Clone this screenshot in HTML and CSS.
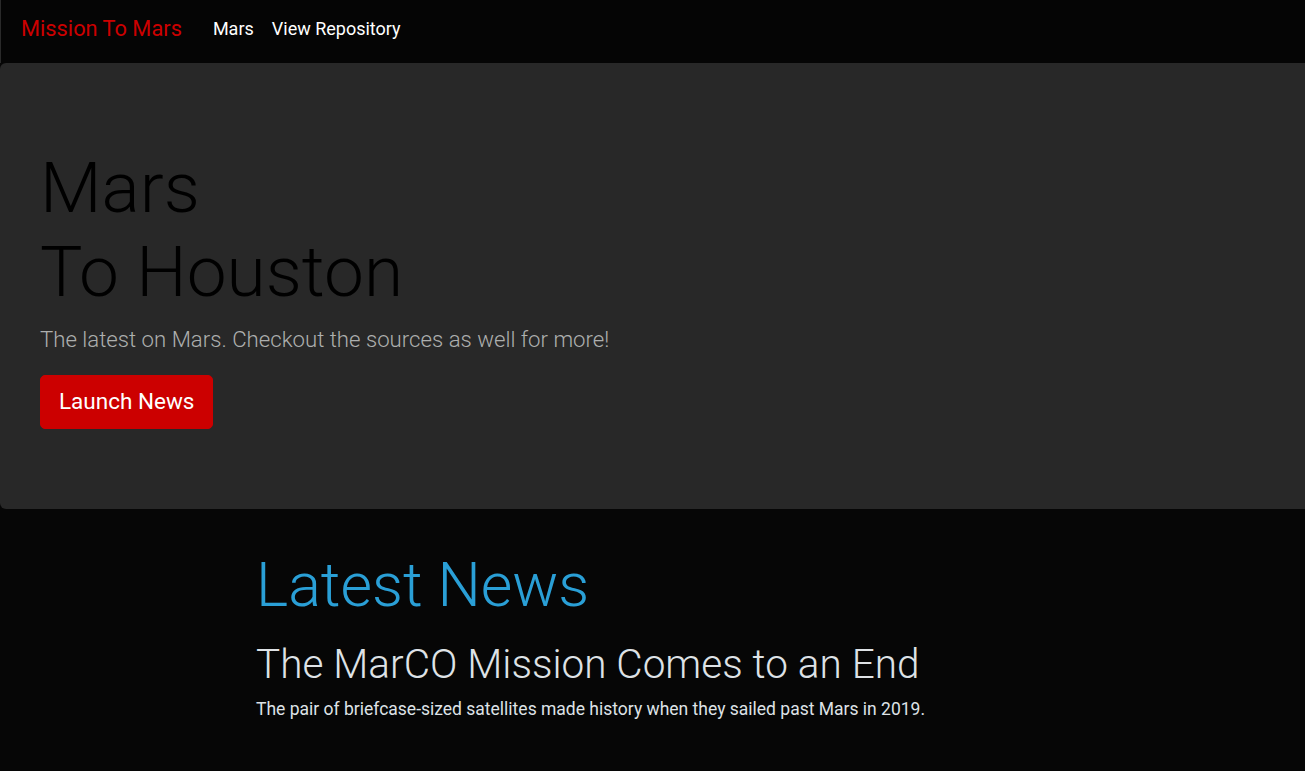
FILE: index.html
```html
<!DOCTYPE html>
<html lang="en">
<head>
<meta charset="utf-8">
<title>Mission To Mars</title>
<link rel="stylesheet" href="styles.css">
</head>
<body>
<nav class="navbar">
  <a class="brand" href="#">Mission To Mars</a>
  <ul class="nav">
    <li><a class="nav-link" href="#">Mars</a></li>
    <li><a class="nav-link" href="#">View Repository</a></li>
  </ul>
</nav>
<header class="jumbotron">
  <h1 class="display">Mars<br>To Houston</h1>
  <p class="lead">The latest on Mars. Checkout the sources as well for more!</p>
  <a class="btn" href="#">Launch News</a>
</header>
<main class="container">
  <h1 class="section-title">Latest News</h1>
  <h2 class="news-title">The MarCO Mission Comes to an End</h2>
  <p class="news-text">The pair of briefcase-sized satellites made history when they sailed past Mars in 2019.</p>
</main>
</body>
</html>
```
FILE: styles.css
```css
html, body {
  margin: 0;
  padding: 0;
}
body {
  background: #060606;
  color: #adafae;
  font-family: Roboto, "Liberation Sans", Arial, sans-serif;
  font-size: 18px;
  line-height: 1.5;
  min-height: 771px;
}
a { text-decoration: none; }

.navbar {
  display: flex;
  align-items: center;
  height: 63px;
  box-sizing: border-box;
  padding: 3px 18px 10px;
  background: #050505;
  border-left: 1px solid #2a2a2a;
}
.brand {
  color: #cc0000;
  font-size: 21.8px;
  line-height: 33.75px;
  padding: 7.6px 0 5.6px;
  margin-left: 2px;
  margin-right: 22px;
}
.nav {
  display: flex;
  list-style: none;
  margin: 0;
  padding: 0;
}
.nav-link {
  display: block;
  color: #ffffff;
  padding: 9px 9px;
  font-size: 18px;
  line-height: 27px;
}

.jumbotron {
  background: #282828;
  padding: 83px 40px 80px;
  border-radius: 6px 0 0 6px;
}
.display {
  margin: 0 0 9px;
  font-size: 71.2px;
  font-weight: 300;
  line-height: 84px;
  color: #000000;
}
.lead {
  margin: 0 0 18px;
  font-size: 22.2px;
  font-weight: 300;
  line-height: 33.75px;
  color: #adafae;
}
.btn {
  display: inline-block;
  background: #cc0000;
  color: #ffffff;
  border: 1px solid #cc0000;
  border-radius: 5px;
  padding: 9px 18px;
  font-size: 22.5px;
  line-height: 33.75px;
  vertical-align: top;
}

.container {
  width: 793px;
  margin: 0 auto;
  padding-top: 40px;
}
.section-title {
  margin: 0 0 19px;
  font-size: 61px;
  font-weight: 300;
  line-height: 72px;
  color: #2a9fd6;
}
.news-title {
  margin: 0 0 8px;
  font-size: 40.5px;
  font-weight: 300;
  line-height: 48.6px;
  color: #dee2e6;
}
.news-text {
  margin: 0;
  font-size: 17.5px;
  line-height: 27px;
  color: #dee2e6;
}
```
